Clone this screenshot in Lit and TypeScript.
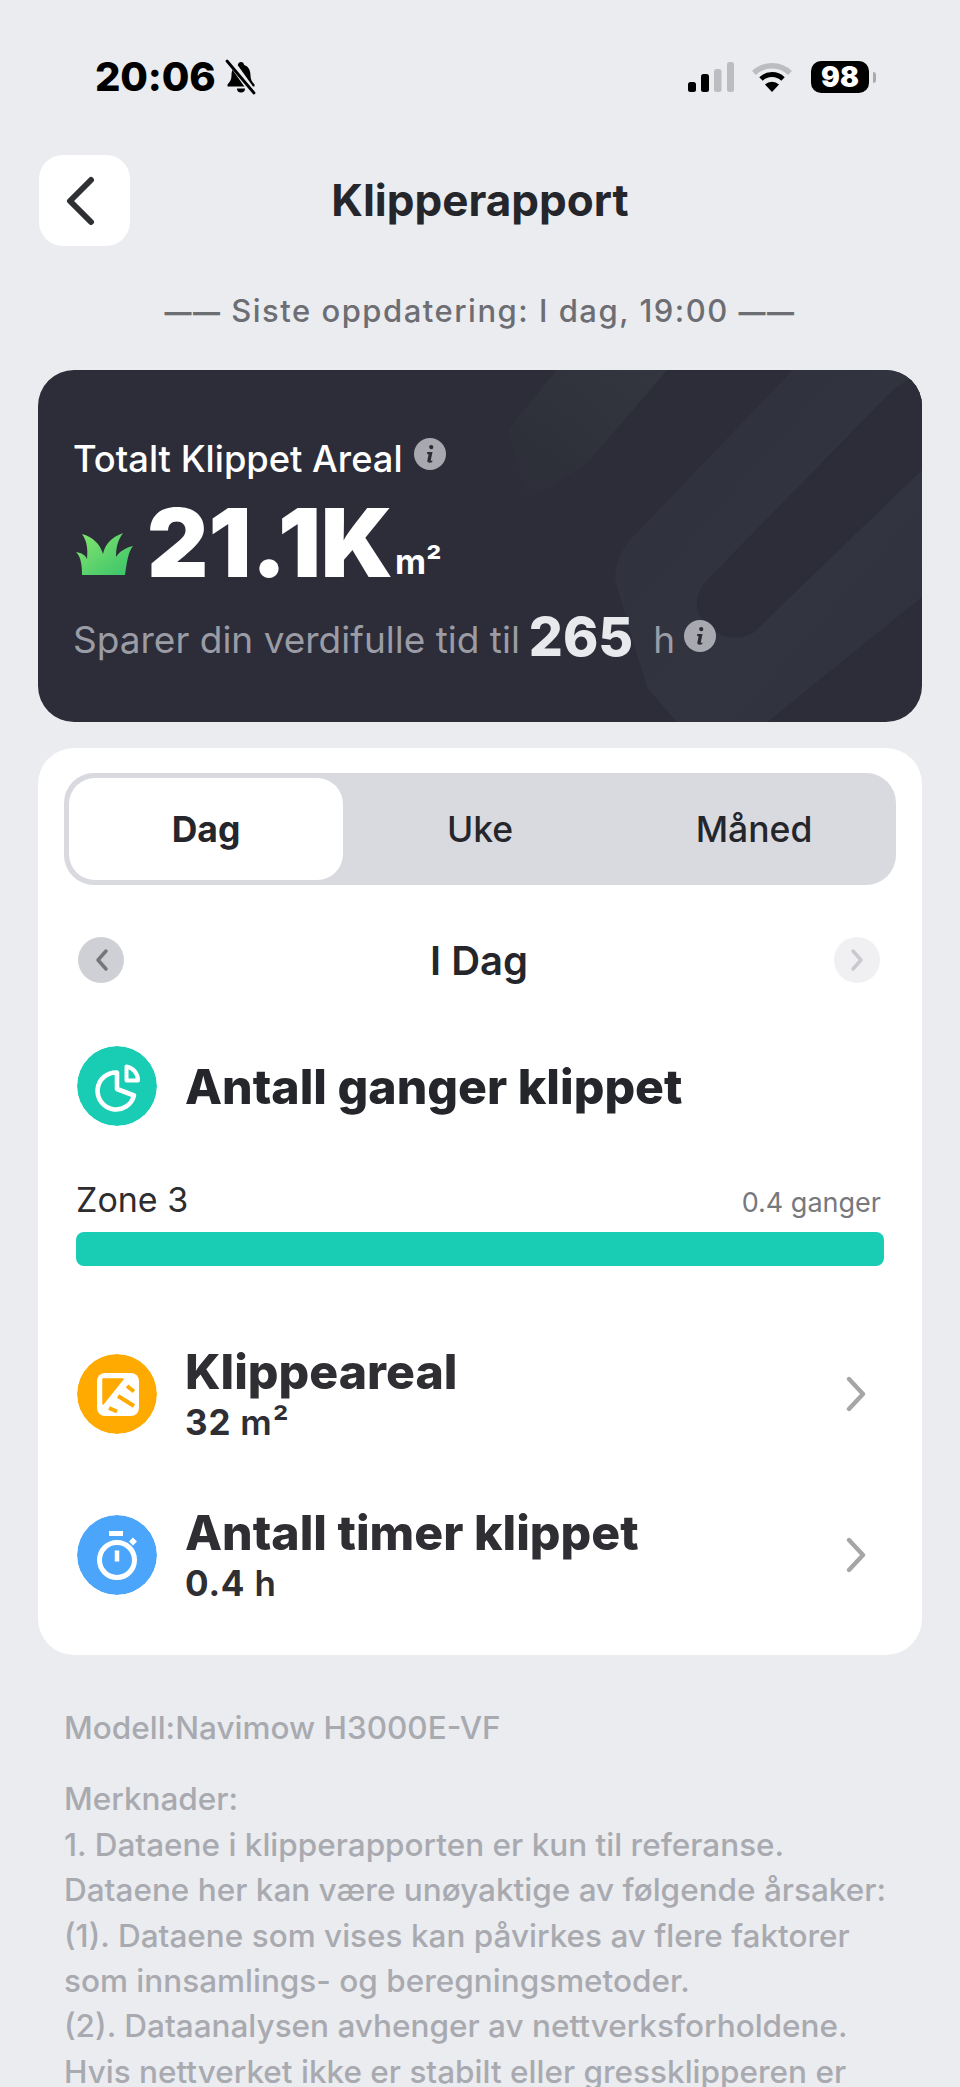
import { LitElement, html, css, svg } from 'lit';
import { customElement } from 'lit/decorators.js';

const infoIcon = html`
  <svg class="info" viewBox="0 0 30 30">
    <circle cx="15" cy="15" r="15" fill="currentColor"></circle>
    <path d="M16.2 6.6a2 2 0 1 1-.1 4 2 2 0 0 1 .1-4zM12.4 13.2h5l-1.700 7.600c-.1.6.4.7 1.600.3l-.2 1.500c-1.400.7-5 1.100-4.600-1.500l1.200-5.900-1.400-.3z" fill="#2b2c38"></path>
  </svg>`;

const chevronRight = html`
  <svg class="chevron" viewBox="0 0 20 36">
    <path d="M3 3l14 15L3 33" fill="none" stroke="#a6a6a8" stroke-width="4.400" stroke-linecap="round" stroke-linejoin="round"></path>
  </svg>`;

const pieIcon = svg`
  <path d="M40 26.500A18.500 18.500 0 1 0 57 49.500L40 43z" fill="none" stroke="#fff" stroke-width="4.600" stroke-linejoin="round"></path>
  <path d="M49.500 20.500A14 14 0 0 1 61 34.500H49.500z" fill="none" stroke="#fff" stroke-width="4" stroke-linejoin="round"></path>`;

const areaIcon = svg`
  <rect x="20" y="19" width="42" height="43" rx="8" fill="#fff"></rect>
  <path d="M26 25h20L26 50z" fill="#ffaa00" stroke="#ffaa00" stroke-width="1.500" stroke-linejoin="round"></path>
  <path d="M50 32l7 5.500M41 42l16 10M32 54l8 3.500" stroke="#ffaa00" stroke-width="4"></path>`;

const timerIcon = svg`
  <circle cx="40" cy="45" r="17.500" fill="none" stroke="#fff" stroke-width="5"></circle>
  <path d="M32 18.500h14" stroke="#fff" stroke-width="5"></path>
  <path d="M54 24.500l4 4" stroke="#fff" stroke-width="5.500"></path>
  <path d="M40 35.500v11" stroke="#fff" stroke-width="4.500"></path>`;

const metrics = [
  { title: 'Klippeareal', value: 'm²', amount: '32', color: '#ffaa00', icon: areaIcon },
  { title: 'Antall timer klippet', value: 'h', amount: '0.4', color: '#4ba6fb', icon: timerIcon },
];

const notes = [
  'Merknader:',
  '1. Dataene i klipperapporten er kun til referanse.',
  'Dataene her kan være unøyaktige av følgende årsaker:',
  '(1). Dataene som vises kan påvirkes av flere faktorer',
  'som innsamlings- og beregningsmetoder.',
  '(2). Dataanalysen avhenger av nettverksforholdene.',
  'Hvis nettverket ikke er stabilt eller gressklipperen er',
];

@customElement('app-root')
export class AppRoot extends LitElement {
  static styles = css`
    :host {
      display: block;
      height: 2087px;
      overflow: hidden;
      background: #eaecf0;
      font-family: Inter, 'Liberation Sans', sans-serif;
      color: #25262b;
    }

    .status {
      display: flex;
      align-items: center;
      height: 32px;
      padding: 61px 84px 0 95px;
    }

    .time {
      font-size: 40px;
      font-weight: 800;
      color: #000;
      line-height: 32px;
      letter-spacing: -0.2px;
    }

    .bell {
      width: 34px;
      height: 36px;
      margin-left: 9px;
    }

    .status-right {
      display: flex;
      align-items: center;
      margin-left: auto;
    }

    .signal {
      width: 46px;
      height: 30px;
    }

    .wifi {
      width: 40px;
      height: 30px;
      margin-left: 18px;
    }

    .battery {
      width: 58px;
      height: 32px;
      margin-left: 19px;
      border-radius: 10px;
      background: #000;
      color: #fff;
      font-size: 28px;
      font-weight: 900;
      line-height: 32px;
      text-align: center;
    }

    .nub {
      width: 3px;
      height: 11px;
      margin-left: 4px;
      border-radius: 0 3px 3px 0;
      background: #a9aaad;
    }

    .nav {
      display: flex;
      align-items: center;
      height: 91px;
      margin-top: 62px;
      padding: 0 39px;
    }

    .back {
      display: flex;
      align-items: center;
      justify-content: center;
      width: 91px;
      height: 91px;
      border-radius: 24px;
      background: #fff;
    }

    .back svg {
      width: 32px;
      height: 50px;
      margin-right: 10px;
    }

    .nav h1 {
      flex: 1;
      margin: -2px 91px 0 0;
      font-size: 44px;
      font-weight: 700;
      text-align: center;
      color: #25262b;
    }

    .updated {
      margin-top: 43px;
      font-size: 31px;
      line-height: 44px;
      font-weight: 500;
      text-align: center;
      letter-spacing: 1.500px;
      color: #6d6e73;
    }

    .dash {
      font-size: 27px;
      font-weight: 700;
    }

    .summary {
      position: relative;
      box-sizing: border-box;
      height: 352px;
      margin: 35px 38px 0;
      padding: 67px 35px 0;
      border-radius: 36px;
      background: #2c2d38;
      overflow: hidden;
    }

    .summary-bg {
      position: absolute;
      inset: 0;
      width: 100%;
      height: 100%;
    }

    .summary-title,
    .total,
    .saved {
      position: relative;
      display: flex;
    }

    .summary-title {
      align-items: center;
      height: 44px;
      font-size: 36.300px;
      font-weight: 500;
      color: #fff;
    }

    .info {
      width: 32px;
      height: 32px;
      color: #a7a8b0;
    }

    .summary-title .info {
      margin: -10px 0 0 11px;
    }

    .total {
      align-items: flex-end;
      height: 80px;
      margin-top: 15px;
      color: #fff;
      font-weight: 900;
    }

    .grass {
      width: 58px;
      height: 44px;
      margin: 0 13px 0 3px;
    }

    .total-value {
      font-size: 95px;
      line-height: 66px;
    }

    .total-unit {
      margin-left: 2px;
      font-size: 34px;
      line-height: 28px;
      font-weight: 700;
    }

    .saved {
      align-items: center;
      height: 50px;
      margin-top: 38px;
      font-size: 37px;
      font-weight: 400;
      color: #9b9ca5;
    }

    .saved b {
      margin: -6px 20px 0 9px;
      font-size: 53.500px;
      font-weight: 800;
      color: #e8e9ec;
    }

    .saved .info {
      margin: -6px 0 0 9px;
    }

    .report {
      box-sizing: border-box;
      height: 907px;
      margin: 26px 38px 0;
      padding: 25px 26px 0;
      border-radius: 36px;
      background: #fff;
    }

    .tabs {
      display: grid;
      grid-template-columns: repeat(3, 1fr);
      height: 112px;
      padding: 5px;
      box-sizing: border-box;
      border-radius: 30px;
      background: #d9dae0;
    }

    .tab {
      display: flex;
      align-items: center;
      justify-content: center;
      font-size: 35.500px;
      font-weight: 500;
    }

    .tab.active {
      border-radius: 26px;
      background: #fff;
      font-weight: 700;
    }

    .day {
      display: flex;
      align-items: center;
      justify-content: space-between;
      height: 50px;
      margin-top: 50px;
      padding: 0 16px 0 14px;
      font-size: 40px;
      font-weight: 600;
    }

    .round {
      display: flex;
      align-items: center;
      justify-content: center;
      width: 46px;
      height: 46px;
      border-radius: 50%;
      background: #cfd0d5;
    }

    .round svg {
      width: 15px;
      height: 24px;
    }

    .round.off {
      background: #f0f0f3;
    }

    .head {
      display: flex;
      align-items: center;
      gap: 28px;
      margin-top: 61px;
      padding: 0 13px;
    }

    .badge {
      flex: none;
      width: 80px;
      height: 80px;
      border-radius: 50%;
    }

    .head-title {
      font-size: 48.200px;
      font-weight: 800;
    }

    .zone {
      display: flex;
      align-items: baseline;
      justify-content: space-between;
      margin-top: 49px;
      padding: 0 15px 0 12px;
      font-size: 34px;
      line-height: 50px;
      color: #2d2d2f;
    }

    .zone small {
      font-size: 27px;
      color: #77787c;
    }

    .bar {
      height: 34px;
      margin: 4px 12px 0;
      border-radius: 8px;
      background: #19cdb4;
    }

    .metrics {
      display: flex;
      flex-direction: column;
      gap: 59px;
      margin-top: 77px;
    }

    .metric {
      display: flex;
      align-items: center;
      gap: 28px;
      padding: 0 13px;
    }

    .metric-text {
      flex: 1;
      padding-top: 2px;
      color: #2e2e33;
    }

    .metric-title {
      font-size: 48.200px;
      line-height: 54px;
      font-weight: 800;
    }

    .metric-value {
      font-size: 35px;
      line-height: 46px;
      font-weight: 700;
      letter-spacing: 0.8px;
    }

    .metric-value span {
      font-weight: 600;
    }

    .chevron {
      width: 20px;
      height: 36px;
      margin-right: 17px;
    }

    .notes {
      padding: 50px 64px 0;
      font-size: 31.500px;
      font-weight: 500;
      line-height: 45.400px;
      color: #a9aab0;
    }

    .notes p {
      margin: 0 0 26px;
    }

    .line {
      white-space: nowrap;
    }
  `;

  render() {
    return html`
      <div class="status">
        <span class="time">20:06</span>
        <svg class="bell" viewBox="0 0 34 36">
          <path d="M17 3c2 0 3 1.500 3.200 3 4.500 1.500 6.300 5.500 6.300 10.500 0 4 1.500 6 4 9v2H3.500v-2c2.500-3 4-5 4-9 0-5 1.800-9 6.300-10.500C14 4.500 15 3 17 3z" fill="#000"></path>
          <path d="M13 29.500h8a4 4 0 0 1-8 0z" fill="#000"></path>
          <path d="M5 0l25 35" stroke="#eaecf0" stroke-width="7"></path>
          <path d="M3 2l27 32" stroke="#000" stroke-width="2.800" stroke-linecap="round"></path>
        </svg>
        <div class="status-right">
          <svg class="signal" viewBox="0 0 46 30">
            <rect x="0" y="20" width="8" height="10" rx="2.500" fill="#000"></rect>
            <rect x="13" y="12" width="8" height="18" rx="2.500" fill="#000"></rect>
            <rect x="26" y="7" width="7.500" height="23" rx="2.500" fill="#bcbdc0"></rect>
            <rect x="39" y="0" width="7" height="30" rx="2.500" fill="#bcbdc0"></rect>
          </svg>
          <svg class="wifi" viewBox="0 0 40 30">
            <path d="M2 11a26 26 0 0 1 36 0" fill="none" stroke="#bcbdc0" stroke-width="5.500"></path>
            <path d="M9 17a16 16 0 0 1 22 0" fill="none" stroke="#000" stroke-width="5"></path>
            <path d="M13 22.500a10 10 0 0 1 14 0L20 30z" fill="#000"></path>
          </svg>
          <div class="battery">98</div>
          <div class="nub"></div>
        </div>
      </div>

      <div class="nav">
        <div class="back">
          <svg viewBox="0 0 32 50">
            <path d="M27 4L6 25l21 21" fill="none" stroke="#2f3033" stroke-width="6" stroke-linecap="round" stroke-linejoin="round"></path>
          </svg>
        </div>
        <h1>Klipperapport</h1>
      </div>

      <div class="updated"><span class="dash">——</span> Siste oppdatering: I dag, 19:00 <span class="dash">——</span></div>

      <div class="summary">
        <svg class="summary-bg" viewBox="0 0 884 352" preserveAspectRatio="none">
          <defs>
            <linearGradient id="band" x1="1" y1="0" x2="0" y2="1">
              <stop offset="0" stop-color="#33363f"></stop>
              <stop offset="1" stop-color="#2c2d38"></stop>
            </linearGradient>
            <linearGradient id="shape" x1="0" y1="0" x2="1" y2="1">
              <stop offset="0" stop-color="#2f303b"></stop>
              <stop offset="0.6" stop-color="#32343f"></stop>
              <stop offset="1" stop-color="#2f313c"></stop>
            </linearGradient>
          </defs>
          <path d="M519 0h110L549 93 490 130 470 60z" fill="url(#band)"></path>
          <path d="M755 0L595 167C578 185 575 205 579 217L609 317L639 352H729L884 227V0z" fill="url(#shape)"></path>
          <path d="M855 20L669 210C655 226 655 245 672 258C688 270 702 270 715 263L884 100V0z" fill="#2c2d38"></path>
        </svg>
        <div class="summary-title">Totalt Klippet Areal ${infoIcon}</div>
        <div class="total">
          <svg class="grass" viewBox="0 0 58 44">
            <defs>
              <linearGradient id="grass" x1="0" y1="0" x2="1" y2="1">
                <stop offset="0" stop-color="#86e66f"></stop>
                <stop offset="1" stop-color="#38c26a"></stop>
              </linearGradient>
            </defs>
            <path d="M6 43C6 33 5 25 0 20c6 1 9 3 11 7C12 17 11 9 6 2c11 3 18 10 21 20C29 12 36 5 47 1c-5 7-7 14-7 24 3-5 9-9 17-11-5 6-6 16-8 29z" fill="url(#grass)"></path>
          </svg>
          <span class="total-value">21.1K</span>
          <span class="total-unit">m²</span>
        </div>
        <div class="saved">Sparer din verdifulle tid til <b>265</b> h ${infoIcon}</div>
      </div>

      <div class="report">
        <div class="tabs">
          <div class="tab active">Dag</div>
          <div class="tab">Uke</div>
          <div class="tab">Måned</div>
        </div>

        <div class="day">
          <div class="round">
            <svg viewBox="0 0 15 24"><path d="M12 3L4 12l8 9" fill="none" stroke="#75767b" stroke-width="3.500" stroke-linecap="round" stroke-linejoin="round"></path></svg>
          </div>
          <span>I Dag</span>
          <div class="round off">
            <svg viewBox="0 0 15 24"><path d="M3 3l8 9-8 9" fill="none" stroke="#c9cace" stroke-width="3.500" stroke-linecap="round" stroke-linejoin="round"></path></svg>
          </div>
        </div>

        <div class="head">
          <svg class="badge" viewBox="0 0 80 80">
            <circle cx="40" cy="40" r="40" fill="#19cdb4"></circle>
            ${pieIcon}
          </svg>
          <span class="head-title">Antall ganger klippet</span>
        </div>

        <div class="zone"><span>Zone 3</span><small>0.4 ganger</small></div>
        <div class="bar"></div>

        <div class="metrics">
          ${metrics.map(
            (m) => html`
              <div class="metric">
                <svg class="badge" viewBox="0 0 80 80">
                  <circle cx="40" cy="40" r="40" fill="${m.color}"></circle>
                  ${m.icon}
                </svg>
                <div class="metric-text">
                  <div class="metric-title">${m.title}</div>
                  <div class="metric-value">${m.amount} <span>${m.value}</span></div>
                </div>
                ${chevronRight}
              </div>
            `
          )}
        </div>
      </div>

      <div class="notes">
        <p>Modell:Navimow H3000E-VF</p>
        ${notes.map((n) => html`<div class="line">${n}</div>`)}
      </div>
    `;
  }
}

declare global {
  interface HTMLElementTagNameMap {
    'app-root': AppRoot;
  }
}
